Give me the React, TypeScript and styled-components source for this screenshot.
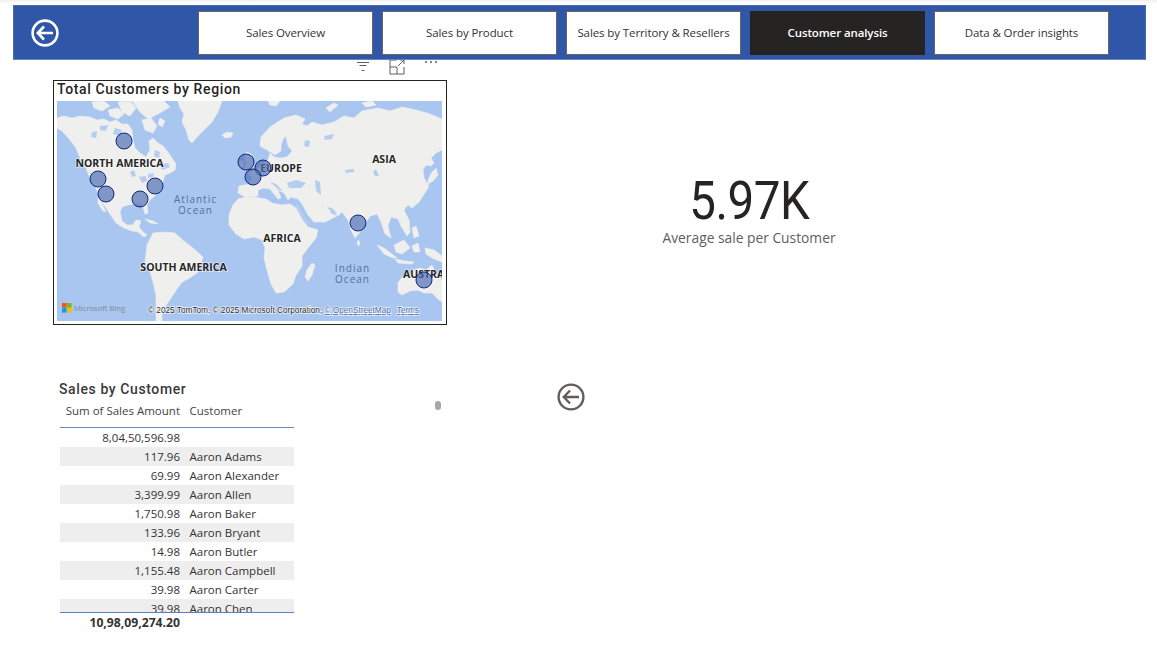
import React from "react";
import styled, { createGlobalStyle } from "styled-components";

const Global = createGlobalStyle`
  html, body { margin: 0; padding: 0; background: #fff; }
  body { font-family: "Open Sans", "Liberation Sans", sans-serif; overflow: hidden; }
`;

const Page = styled.div`
  position: relative;
  width: 1157px;
  height: 653px;
  padding-top: 5px;
  box-sizing: border-box;
  overflow: hidden;
  background: linear-gradient(#f0f0f0, #fff 4px);
`;

const Banner = styled.header`
  position: relative;
  z-index: 2;
  margin: 0 11px 0 13px;
  height: 55px;
  box-sizing: border-box;
  background: #3056a8;
  border: 1px solid #4a6bb3;
  border-bottom-color: #6a86c0;
  display: flex;
  align-items: center;
  padding-left: 17px;
`;

const BackSlot = styled.div`
  width: 167px;
  display: flex;
  align-items: center;
`;

const Nav = styled.nav`
  display: flex;
  gap: 9px;
`;

const NavButton = styled.div<{ $active?: boolean }>`
  width: 175px;
  height: 44px;
  box-sizing: border-box;
  display: flex;
  align-items: center;
  justify-content: center;
  font-size: 11.5px;
  letter-spacing: -0.1px;
  white-space: nowrap;
  background: ${(p) => (p.$active ? "#252423" : "#fff")};
  color: ${(p) => (p.$active ? "#fff" : "#333")};
  font-weight: ${(p) => (p.$active ? 600 : 400)};
  border: 1px solid ${(p) => (p.$active ? "#252423" : "#666")};
`;

const TopRow = styled.section`
  display: flex;
  margin: 20px 0 0 53px;
`;

const MapCard = styled.div`
  position: relative;
  width: 394px;
  height: 245px;
  box-sizing: border-box;
  border: 1px solid #222;
  padding: 0 4px 3px 3px;
  display: flex;
  flex-direction: column;
`;

const MapTitle = styled.h2`
  margin: 0;
  height: 20px;
  font: 500 14px/16px Roboto, sans-serif;
  letter-spacing: 0.62px;
  color: #252423;
  white-space: nowrap;
`;

const MapCanvas = styled.svg`
  display: block;
  width: 385px;
  height: 220px;
`;

const VisualTools = styled.div`
  position: absolute;
  top: -23px;
  left: 300px;
  width: 88px;
  height: 16px;
`;

const KpiBlock = styled.div`
  width: 230px;
  margin: 91px 0 0 187px;
  display: flex;
  flex-direction: column;
  align-items: center;
`;

const KpiValue = styled.div`
  font: 400 54px/60px Roboto, sans-serif;
  color: #252423;
  letter-spacing: -0.5px;
  transform: scaleX(0.88);
  white-space: nowrap;
`;

const KpiLabel = styled.div`
  font-size: 13.8px;
  line-height: 18px;
  color: #605e5c;
  white-space: nowrap;
  margin-top: -2px;
`;

const BottomRow = styled.section`
  display: flex;
  align-items: flex-start;
  margin: 55px 0 0 60px;
`;

const TableVisual = styled.div`
  width: 234px;
`;

const TableTitle = styled.h3`
  margin: 0 0 0 -1px;
  font: 500 14px/18px Roboto, sans-serif;
  letter-spacing: 0.6px;
  color: #3a3a3a;
  height: 18px;
`;

const Row = styled.div<{ $band?: boolean }>`
  display: grid;
  grid-template-columns: 120px 1fr;
  height: 19.1px;
  line-height: 19px;
  font-size: 11.5px;
  color: #333;
  background: ${(p) => (p.$band ? "#eeeeee" : "transparent")};
  white-space: nowrap;
`;

const HeadRow = styled(Row)`
  height: 25.5px;
  line-height: 20px;
  margin-top: 3px;
  border-bottom: 1px solid #6d86b5;
  color: #444;
  box-sizing: content-box;
`;

const Amount = styled.span`
  text-align: right;
`;

const Name = styled.span`
  padding-left: 9.5px;
`;

const Body = styled.div`
  height: 184px;
  overflow: hidden;
  border-bottom: 1px solid #5b80c8;
`;

const TotalRow = styled(Row)`
  font-weight: 700;
  font-size: 12.2px;
  color: #333;
`;

const ScrollDot = styled.div`
  width: 6px;
  height: 9px;
  margin: 21px 0 0 141px;
  border-radius: 3px;
  background: #a8a8a8;
`;

const PageBack = styled.div`
  margin: 3px 0 0 116px;
  line-height: 0;
`;

const rows: [string, string][] = [
  ["8,04,50,596.98", ""],
  ["117.96", "Aaron Adams"],
  ["69.99", "Aaron Alexander"],
  ["3,399.99", "Aaron Allen"],
  ["1,750.98", "Aaron Baker"],
  ["133.96", "Aaron Bryant"],
  ["14.98", "Aaron Butler"],
  ["1,155.48", "Aaron Campbell"],
  ["39.98", "Aaron Carter"],
  ["39.98", "Aaron Chen"],
];

const BackArrow = ({ color, size, w }: { color: string; size: number; w: number }) => (
  <svg width={size} height={size} viewBox="0 0 28 28" fill="none" stroke={color} strokeWidth={w}>
    <circle cx="14" cy="14" r="12.4" />
    <path d="M22 14H7M13 7.5 6.8 14l6.2 6.5" />
  </svg>
);

const land = [
  // North America
  "M57 118 64 116 72 118 80 116 90 117 97 120 104 119 110 122 116 120 122 124 128 124 132 130 133 140 135 148 140 153 146 157 150 150 149 141 153 138 158 143 163 146 168 152 172 158 176 164 175 170 170 173 165 175 163 181 162 190 156 195 150 200 147 205 148 213 145 214 143 207 141 204 134 204 128 205 122 207 120 212 122 221 127 225 133 225 136 220 141 221 139 227 143 232 147 235 144 237 138 232 132 231 124 228 116 223 110 214 104 205 100 198 96 188 90 178 86 168 80 158 76 148 70 140 62 131 57 128Z",
  // Arctic islands
  "M92 102 104 101 110 106 102 111 94 108Z",
  "M108 110 118 108 124 114 118 119 110 116Z",
  "M118 102 130 101 136 108 130 116 122 112Z",
  "M132 101 164 101 170 107 158 114 148 119 140 112Z",
  "M142 120 151 118 157 126 153 133 145 130Z",
  "M160 118 165 121 162 127 158 124Z",
  // Baja
  "M98 196 102 204 106 212 103 211 98 203Z",
  // Cuba
  "M145 219 153 221 158 224 150 223Z",
  // Greenland
  "M178 101 222 101 218 112 212 122 204 130 198 136 192 143 189 140 186 130 182 122 184 114 180 108Z",
  // Iceland
  "M222 135 227 132 233 133 231 137 225 138Z",
  // Britain / Ireland
  "M246 152 251 154 254 166 249 170 244 169 247 163 244 158Z",
  "M240 160 244 161 243 167 239 166Z",
  // Eurasia
  "M258 196 245 197 238 193 239 186 250 184 252 178 248 173 256 170 262 165 268 160 270 153 274 157 280 158 287 157 292 151 288 146 286 136 283 139 281 146 281 151 275 155 267 150 260 146 261 137 270 127 284 118 296 115 305 119 302 124 307 126 312 122 322 125 334 122 344 116 354 118 362 111 378 108 390 111 402 107 416 110 430 114 442 119 442 150 436 153 431 158 434 163 431 166 426 165 423 170 424 178 429 186 425 193 419 202 412 208 408 205 404 210 409 220 410 232 407 236 401 226 398 219 391 217 388 226 391 238 385 234 381 222 377 214 370 216 365 224 360 232 355 238 351 230 348 220 342 212 338 216 332 209 330 213 337 216 325 222 314 222 308 215 302 204 298 199 291 197 288 200 284 193 278 190 281 198 278 199 270 189 264 188 258 190Z",
  // Novaya Zemlya / Svalbard
  "M326 108 334 103 338 105 330 112Z",
  "M268 101 280 101 276 106 270 105Z",
  "M362 103 372 101 376 105 366 107Z",
  // Africa
  "M233 205 238 199 246 197 254 197 266 199 272 203 282 205 290 204 296 208 302 219 308 227 318 230 316 238 308 248 302 256 302 266 296 275 293 284 284 292 276 293 271 284 267 270 264 258 265 248 262 240 254 237 244 239 236 234 229 225 229 215Z",
  // Madagascar
  "M312 263 315 265 312 275 308 281 305 277 307 270Z",
  // South America
  "M147 245 153 233 165 232 175 233 184 241 193 248 203 257 200 266 197 273 188 279 182 282 177 289 173 295 167 304 162 312 162 321 156 321 156 295 153 282 150 272 145 262Z",
  // Sri Lanka
  "M358 240 360 242 359 246 357 244Z",
  // Islands of SE Asia
  "M377 245 384 248 397 258 393 258 384 254Z",
  "M395 259 405 261 414 262 412 264 398 263Z",
  "M394 245 404 240 410 248 402 254 396 252Z",
  "M412 246 418 243 420 252 414 252Z",
  "M425 248 434 250 442 256 442 262 432 258 426 254Z",
  "M412 228 416 226 419 236 414 238Z",
  // Australia
  "M398 283 402 277 410 275 414 270 420 268 426 270 432 265 436 274 442 280 442 302 438 299 432 293 424 293 418 290 410 291 402 295 398 292Z",
  // Japan
  "M432 172 436 168 438 175 433 181 428 184 428 180Z",
];

const water = [
  // Great Lakes and Canadian inlets
  "M139 177 146 176 147 181 142 183Z",
  "M148 174 154 173 153 177 148 178Z",
  "M130 172 134 170 136 176 132 177Z",
  "M115 128 122 130 120 136 113 134Z",
  "M100 126 108 125 106 131 100 130Z",
  "M92 132 97 131 96 138 91 137Z",
  "M160 164 168 163 170 167 162 170Z",
  "M155 150 160 152 159 158 154 156Z",
  // Black Sea, Caspian, Adriatic, Persian Gulf, Red Sea
  "M287 183 296 180 306 183 301 188 289 188Z",
  "M315 180 320 182 321 195 316 191Z",
  "M270 182 276 184 283 191 279 190Z",
  "M327 207 332 208 337 213 331 212Z",
  "M295 205 298 205 309 224 306 224Z",
  // Russian lakes and rivers
  "M373 172 376 169 379 176 375 176Z",
  "M345 170 354 169 354 172 346 173Z",
  "M305 140 310 141 309 147 304 146Z",
  "M324 136 334 134 332 139 325 140Z",
];

const markers: [number, number][] = [
  [124, 141], [98, 179], [106, 194], [155, 186], [140, 199],
  [246, 162], [263, 168], [253, 177], [358, 223], [424, 280],
];

const labels: [number, number, string][] = [
  [119.5, 167, "NORTH AMERICA"],
  [281, 172, "EUROPE"],
  [384, 163, "ASIA"],
  [282, 242, "AFRICA"],
  [183.5, 271, "SOUTH AMERICA"],
];

const MapLabel = styled.text`
  font: 700 10.5px "Open Sans", sans-serif;
  fill: #262626;
  stroke: #ffffff99;
  stroke-width: 1.6px;
  paint-order: stroke;
  text-anchor: middle;
`;

const AustraliaLabel = styled(MapLabel)`
  text-anchor: start;
`;

const SeaLabel = styled.text`
  font: 400 10px "Open Sans", sans-serif;
  fill: #54709f;
  letter-spacing: 1px;
  text-anchor: middle;
`;

const MapCredit = styled.text`
  font: 400 8.4px "Liberation Sans", sans-serif;
  fill: #2b2b2b;
  stroke: #ffffffcc;
  stroke-width: 1.4px;
  paint-order: stroke;
`;

const CreditLink = styled.tspan`
  fill: #4d6ea8;
  text-decoration: underline;
`;

const BingText = styled.text`
  font: 400 7.6px "Open Sans", sans-serif;
  fill: #7d8a99;
`;

const WorldMap = () => (
  <MapCanvas viewBox="57 101 385 220" aria-label="map">
    <defs>
      <filter id="soft" x="-5%" y="-5%" width="110%" height="110%">
        <feGaussianBlur stdDeviation="0.75" />
      </filter>
    </defs>
    <rect x="57" y="101" width="385" height="220" fill="#a9c6f0" />
    <g filter="url(#soft)">
      {land.map((d, i) => (
        <path key={i} d={d} fill="#efefed" stroke="#efefed" strokeWidth="0.6" strokeLinejoin="round" />
      ))}
      {water.map((d, i) => (
        <path key={i} d={d} fill="#b4cdf0" />
      ))}
    </g>
    {labels.map(([x, y, t]) => (
      <MapLabel key={t} x={x} y={y}>{t}</MapLabel>
    ))}
    <AustraliaLabel x={403} y={278}>AUSTRALIA</AustraliaLabel>
    <SeaLabel x={195.5} y={203}>Atlantic</SeaLabel>
    <SeaLabel x={195.5} y={214}>Ocean</SeaLabel>
    <SeaLabel x={352.5} y={272}>Indian</SeaLabel>
    <SeaLabel x={352.5} y={283}>Ocean</SeaLabel>
    {markers.map(([x, y]) => (
      <circle key={`${x}-${y}`} cx={x} cy={y} r="8" fill="#4a6cb4" fillOpacity="0.68" stroke="#12297c" strokeWidth="1" />
    ))}
    <rect x="62" y="303" width="4.6" height="4.6" fill="#f25022" />
    <rect x="67" y="303" width="4.6" height="4.6" fill="#7fba00" />
    <rect x="62" y="308" width="4.6" height="4.6" fill="#00a4ef" />
    <rect x="67" y="308" width="4.6" height="4.6" fill="#ffb900" />
    <BingText x="74" y="311">Microsoft Bing</BingText>
    <MapCredit x="148" y="313" textLength="243">
      © 2025 TomTom, © 2025 Microsoft Corporation, <CreditLink>© OpenStreetMap</CreditLink>
    </MapCredit>
    <MapCredit x="397" y="313" textLength="22">
      <CreditLink>Terms</CreditLink>
    </MapCredit>
  </MapCanvas>
);

export default function App() {
  return (
    <Page>
      <Global />
      <Banner>
        <BackSlot>
          <BackArrow color="#fff" size={28} w={2.6} />
        </BackSlot>
        <Nav>
          <NavButton>Sales Overview</NavButton>
          <NavButton>Sales by Product</NavButton>
          <NavButton>Sales by Territory &amp; Resellers</NavButton>
          <NavButton $active>Customer analysis</NavButton>
          <NavButton>Data &amp; Order insights</NavButton>
        </Nav>
      </Banner>
      <TopRow>
        <MapCard>
          <VisualTools>
            <svg width="88" height="16" viewBox="0 0 88 16" fill="none" stroke="#605e5c">
              <path d="M3 3.5H15M5.5 6.5H12.5M7.5 11.5H10.5" />
              <path d="M36 1H43M36 1V15H50V8M36 8H43V15M44 7 50 1M46 1H50V5" />
              <g fill="#605e5c" stroke="none">
                <circle cx="72" cy="3" r="1" />
                <circle cx="77" cy="3" r="1" />
                <circle cx="82" cy="3" r="1" />
              </g>
            </svg>
          </VisualTools>
          <MapTitle>Total Customers by Region</MapTitle>
          <WorldMap />
        </MapCard>
        <KpiBlock>
          <KpiValue>5.97K</KpiValue>
          <KpiLabel>Average sale per Customer</KpiLabel>
        </KpiBlock>
      </TopRow>
      <BottomRow>
        <TableVisual>
          <TableTitle>Sales by Customer</TableTitle>
          <HeadRow>
            <Amount>Sum of Sales Amount</Amount>
            <Name>Customer</Name>
          </HeadRow>
          <Body>
            {rows.map(([a, n], i) => (
              <Row key={a + n} $band={i % 2 === 1}>
                <Amount>{a}</Amount>
                <Name>{n}</Name>
              </Row>
            ))}
          </Body>
          <TotalRow>
            <Amount>10,98,09,274.20</Amount>
          </TotalRow>
        </TableVisual>
        <ScrollDot />
        <PageBack>
          <BackArrow color="#605e5c" size={28} w={2.4} />
        </PageBack>
      </BottomRow>
    </Page>
  );
}
